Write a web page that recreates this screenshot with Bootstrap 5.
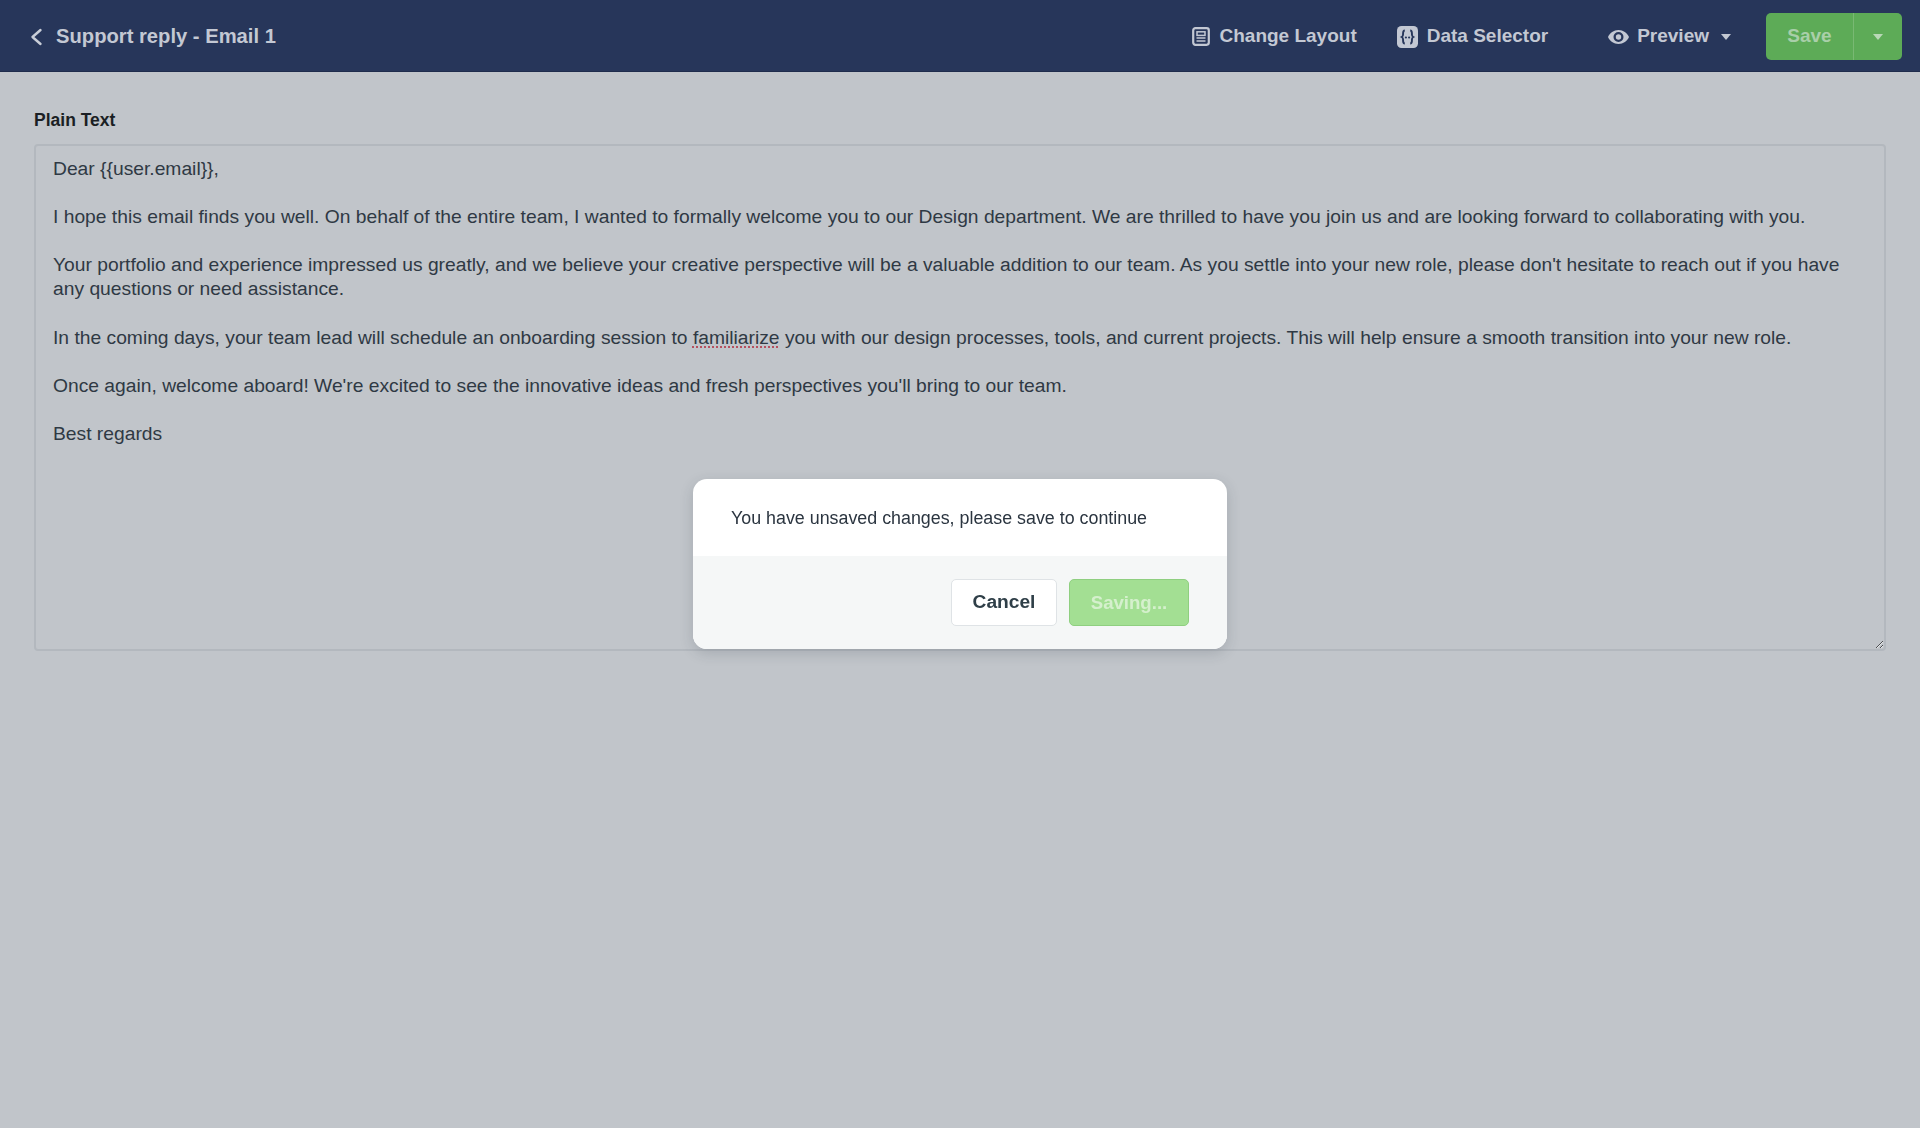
<!doctype html>
<html lang="en">
<head>
<meta charset="utf-8">
<title>Support reply - Email 1</title>
<link href="https://cdn.jsdelivr.net/npm/bootstrap@5.3.0/dist/css/bootstrap.min.css" rel="stylesheet">
<style>
body{background:#c1c5ca;font-family:"Liberation Sans",Arial,sans-serif;color:#2b3540;height:1128px;overflow:hidden}
.topbar{height:72px;background:#27365a;color:#c3c8d3;font-size:20.2px;font-weight:700;padding:2px 18px 0 27px;border-bottom:1px solid #1f2c4c}
.topbar svg{display:block;flex:none}
.bar-title{margin-left:13px}
.bar-item{color:#c3c8d3;font-size:19px;font-weight:700;display:flex;align-items:center}
.bar-gap-a{margin-left:40px}
.bar-gap-b{margin-left:60px}
.icon-gap{margin-right:9px}
.caret-down{width:0;height:0;border-left:5.5px solid transparent;border-right:5.5px solid transparent;border-top:6px solid currentColor;display:block}
.caret-gap{margin-left:12px}
.save-group{height:47px;margin-left:35px}
.save-main,.save-drop{background:#5dab57;color:#a9cfa9;font-weight:700;font-size:19px;border:0;display:flex;align-items:center;justify-content:center;padding:0}
.save-main{width:88px;border-radius:5px 0 0 5px;border-right:1px solid #79b973}
.save-drop{width:48px;border-radius:0 5px 5px 0;color:#b9d8b7}
.editor-wrap{padding:36px 34px 0}
.field-label{font-size:17.5px;font-weight:700;color:#1b1f24;line-height:24px;margin-bottom:12px}
.plain-area{height:507px;background:transparent;border:2px solid #b3b8be;border-radius:4px;padding:11px 17px;font-size:19.25px;line-height:24.1px;color:#2f3944;overflow:auto;resize:vertical;box-shadow:none}
.plain-area p{margin:0 0 24.1px}
.spell{text-decoration:underline dotted #b5505f 2px;text-underline-offset:3px}
.dlg-layer{position:fixed;inset:0}
.dlg{width:534px;height:170px;background:#fff;border-radius:14px;overflow:hidden;box-shadow:0 4px 14px rgba(40,50,60,.18)}
.dlg-text{height:77px;padding:28px 38px 0;font-size:17.85px;line-height:22px;color:#2b3540}
.dlg-foot{height:93px;background:#f5f7f7;padding:23px 38px 0 0;gap:12px}
.btn-cancel,.btn-saving{height:47px;font-weight:700;padding:0;border-radius:5px;display:flex;align-items:center;justify-content:center}
.btn-cancel{width:106px;font-size:19.2px;background:#fff;border:1px solid #dfe3e6;color:#2f3f48}
.btn-saving{width:120px;font-size:18.6px;background:#a3df93;border:1px solid #8fcf80;color:#d5f0cd}
</style>
</head>
<body>
<header class="topbar d-flex align-items-center">
  <svg width="16" height="20" viewBox="0 0 16 20" aria-hidden="true"><path d="M13.500 3 5.500 10l8 7" fill="none" stroke="#c9ced8" stroke-width="2.400" stroke-linecap="round" stroke-linejoin="round"/></svg>
  <span class="bar-title">Support reply - Email 1</span>
  <div class="ms-auto d-flex align-items-center">
    <a class="bar-item text-decoration-none" href="#">
      <svg class="icon-gap" width="18" height="19" viewBox="0 0 18 19" aria-hidden="true"><rect x="1.200" y="1.200" width="15.600" height="16.600" rx="2.200" fill="none" stroke="#c3c8d3" stroke-width="2.200"/><rect x="5" y="4.800" width="8" height="3.600" fill="none" stroke="#c3c8d3" stroke-width="1.500"/><path d="M4.500 11h9M4.500 14h9" stroke="#c3c8d3" stroke-width="1.600"/></svg>
      Change Layout
    </a>
    <a class="bar-item text-decoration-none bar-gap-a" href="#">
      <svg class="icon-gap" width="21" height="22" viewBox="0 0 21 22" aria-hidden="true"><rect width="21" height="22" rx="4.500" fill="#c3c8d3"/><path d="M7.800 4.500C5.600 4.500 6.200 7 6 9 5.900 10.300 4.700 11 4.700 11s1.200.7 1.300 2c.2 2-.4 4.500 1.800 4.500M13.200 4.500c2.200 0 1.600 2.500 1.800 4.500.1 1.300 1.300 2 1.300 2s-1.200.7-1.300 2c-.2 2 .4 4.500-1.800 4.500" fill="none" stroke="#27365a" stroke-width="1.900"/><circle cx="8.900" cy="11.500" r="1.100" fill="#27365a"/><circle cx="12.100" cy="11.500" r="1.100" fill="#27365a"/></svg>
      Data Selector
    </a>
    <a class="bar-item text-decoration-none bar-gap-b" href="#">
      <svg class="me-2" width="21" height="14" viewBox="0 0 21 14" aria-hidden="true"><path fill-rule="evenodd" fill="#c3c8d3" d="M10.500 0c4.700 0 8.800 2.900 10.500 7-1.700 4.100-5.800 7-10.500 7S1.700 11.100 0 7c1.700-4.100 5.800-7 10.500-7Zm0 2a5 5 0 1 0 0 10 5 5 0 0 0 0-10Zm0 2.300a2.700 2.700 0 1 1 0 5.400 2.700 2.700 0 0 1 0-5.400Z"/></svg>
      Preview
      <span class="caret-down caret-gap"></span>
    </a>
    <div class="save-group d-flex">
      <button class="save-main" type="button">Save</button>
      <button class="save-drop" type="button" aria-label="More"><span class="caret-down"></span></button>
    </div>
  </div>
</header>
<main class="editor-wrap">
  <label class="field-label d-block">Plain Text</label>
  <div class="form-control plain-area">
    <p>Dear {{user.email}},</p>
    <p>I hope this email finds you well. On behalf of the entire team, I wanted to formally welcome you to our Design department. We are thrilled to have you join us and are looking forward to collaborating with you.</p>
    <p>Your portfolio and experience impressed us greatly, and we believe your creative perspective will be a valuable addition to our team. As you settle into your new role, please don't hesitate to reach out if you have any questions or need assistance.</p>
    <p>In the coming days, your team lead will schedule an onboarding session to <span class="spell">familiarize</span> you with our design processes, tools, and current projects. This will help ensure a smooth transition into your new role.</p>
    <p>Once again, welcome aboard! We're excited to see the innovative ideas and fresh perspectives you'll bring to our team.</p>
    <p>Best regards</p>
  </div>
</main>
<div class="dlg-layer d-flex align-items-center justify-content-center">
  <div class="dlg" role="dialog">
    <div class="dlg-text">You have unsaved changes, please save to continue</div>
    <div class="dlg-foot d-flex justify-content-end align-items-start">
      <button class="btn-cancel" type="button">Cancel</button>
      <button class="btn-saving" type="button">Saving...</button>
    </div>
  </div>
</div>
<script src="https://cdn.jsdelivr.net/npm/bootstrap@5.3.0/dist/js/bootstrap.bundle.min.js"></script>
</body>
</html>
